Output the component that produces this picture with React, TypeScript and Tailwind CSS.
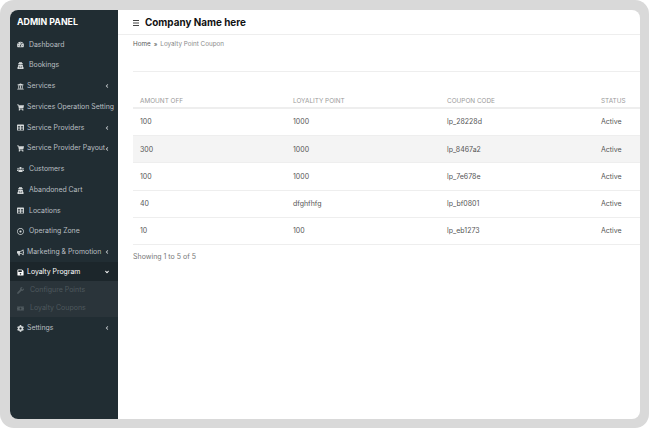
import React from 'react';
import {
  FaTachometerAlt, FaUserSecret, FaUniversity, FaShoppingCart, FaTable, FaUsers, FaRegDotCircle,
  FaBullhorn, FaSave, FaWrench, FaMoneyBill, FaCog, FaAngleLeft, FaAngleDown,
} from 'react-icons/fa';

const menu = [
  { label: 'Dashboard', icon: FaTachometerAlt, gap: 'gap-[5px]' },
  { label: 'Bookings', icon: FaUserSecret, gap: 'gap-[5px]' },
  { label: 'Services', icon: FaUniversity, arrow: true },
  { label: 'Services Operation Setting', icon: FaShoppingCart },
  { label: 'Service Providers', icon: FaTable, arrow: true },
  { label: 'Service Provider Payout', icon: FaShoppingCart, arrow: true },
  { label: 'Customers', icon: FaUsers, gap: 'gap-[5px]' },
  { label: 'Abandoned Cart', icon: FaUserSecret, gap: 'gap-[5px]' },
  { label: 'Locations', icon: FaTable, gap: 'gap-[5px]' },
  { label: 'Operating Zone', icon: FaRegDotCircle, gap: 'gap-[5px]' },
  { label: 'Marketing & Promotion', icon: FaBullhorn, arrow: true },
];

const rows = [
  ['100', '1000', 'lp_28228d', 'Active'],
  ['300', '1000', 'lp_8467a2', 'Active'],
  ['100', '1000', 'lp_7e678e', 'Active'],
  ['40', 'dfghfhfg', 'lp_bf0801', 'Active'],
  ['10', '100', 'lp_eb1273', 'Active'],
];

function MenuRow({ item }: { item: (typeof menu)[number] }) {
  const Icon = item.icon;
  return (
    <div className="flex h-[20.75px] items-center pl-[7px] pr-[8px] pt-[1px] text-[#b9bfc2]">
      <div className={`flex min-w-0 flex-1 items-center ${item.gap ?? 'gap-[3px]'}`}>
        <Icon className="h-[7px] w-[7px] shrink-0 text-[#d5d9da]" />
        <span className="whitespace-nowrap text-[6.9px]">{item.label}</span>
      </div>
      {item.arrow && <FaAngleLeft className="h-[6px] w-[6px] shrink-0" />}
    </div>
  );
}

export default function App() {
  return (
    <div className="h-[428px] w-[649px] overflow-hidden bg-white font-['Inter',sans-serif]">
      <div className="h-full w-full rounded-[14px] bg-[#d9d9d9] p-[10px] pr-[9px] pb-[9px]">
        <div className="flex h-full overflow-hidden rounded-[8px] bg-white">
          <aside className="w-[108px] shrink-0 overflow-hidden bg-[#212d33]">
            <div className="flex h-[24px] items-center pl-[7px] text-[8.8px] font-bold text-white">ADMIN PANEL</div>
            <div>
              {menu.map((item) => (
                <MenuRow key={item.label} item={item} />
              ))}
              <div className="flex h-[19px] items-center bg-[#1c262b] pl-[7px] pr-[8px] pt-[1px] text-white">
                <FaSave className="mr-[3px] h-[7px] w-[7px]" />
                <span className="flex-1 text-[6.9px]">Loyalty Program</span>
                <FaAngleDown className="h-[6px] w-[6px]" />
              </div>
              <div className="bg-[#2a343a] text-[#4f595e]">
                <div className="flex h-[18px] items-center gap-[6px] pl-[7px]">
                  <FaWrench className="h-[7px] w-[7px]" />
                  <span className="text-[7px]">Configure Points</span>
                </div>
                <div className="flex h-[18px] items-center gap-[6px] pl-[7px]">
                  <FaMoneyBill className="h-[7px] w-[7px]" />
                  <span className="text-[7px]">Loyalty Coupons</span>
                </div>
              </div>
              <div className="flex h-[20.75px] items-center pl-[7px] pr-[8px] pt-[1px] text-[#b9bfc2]">
                <FaCog className="mr-[3px] h-[7px] w-[7px] text-[#d5d9da]" />
                <span className="flex-1 text-[6.9px]">Settings</span>
                <FaAngleLeft className="h-[6px] w-[6px]" />
              </div>
            </div>
          </aside>
          <main className="min-w-0 flex-1 overflow-hidden">
            <header className="flex h-[25px] items-center gap-[6px] border-b border-[#eeeeee] pl-[15px] pt-[1px]">
              <svg width="6" height="6" viewBox="0 0 6 6" className="text-[#444444]">
                <path d="M0 .5h6M0 3h6M0 5.5h6" stroke="currentColor" strokeWidth="1" />
              </svg>
              <h1 className="text-[9.9px] font-bold text-[#111111]">Company Name here</h1>
            </header>
            <div className="flex h-[19px] items-center gap-[3px] pl-[15px] text-[6.3px] text-[#8a8a8a]">
              <span className="text-[#555555]">Home</span>
              <span className="text-[#555555]">»</span>
              <span>Loyalty Point Coupon</span>
            </div>
            <div className="ml-[15px] mt-[17px] border-t border-[#eeeeee]" />
            <div className="ml-[15px] mt-[21px] w-[520px]">
              <div className="grid h-[16px] grid-cols-[153px_154px_154px_1fr] items-center border-b-2 border-[#eeeeee] pt-[3px] text-[6.4px] text-[#9a9a9a]">
                <span className="pl-[7px]">AMOUNT OFF</span>
                <span className="pl-[7px]">LOYALITY POINT</span>
                <span className="pl-[7px]">COUPON CODE</span>
                <span className="pl-[7px]">STATUS</span>
              </div>
              {rows.map((row, i) => (
                <div
                  key={row[2]}
                  className={`grid h-[27.2px] grid-cols-[153px_154px_154px_1fr] items-center border-b border-[#eeeeee] pt-[1px] text-[7px] text-[#555555] ${i === 1 ? 'bg-[#f4f4f4]' : ''}`}
                >
                  {row.map((cell, j) => (
                    <span key={j} className="pl-[7px]">{cell}</span>
                  ))}
                </div>
              ))}
              <div className="pt-[7px] text-[7px] text-[#777777]">Showing 1 to 5 of 5</div>
            </div>
          </main>
        </div>
      </div>
    </div>
  );
}
